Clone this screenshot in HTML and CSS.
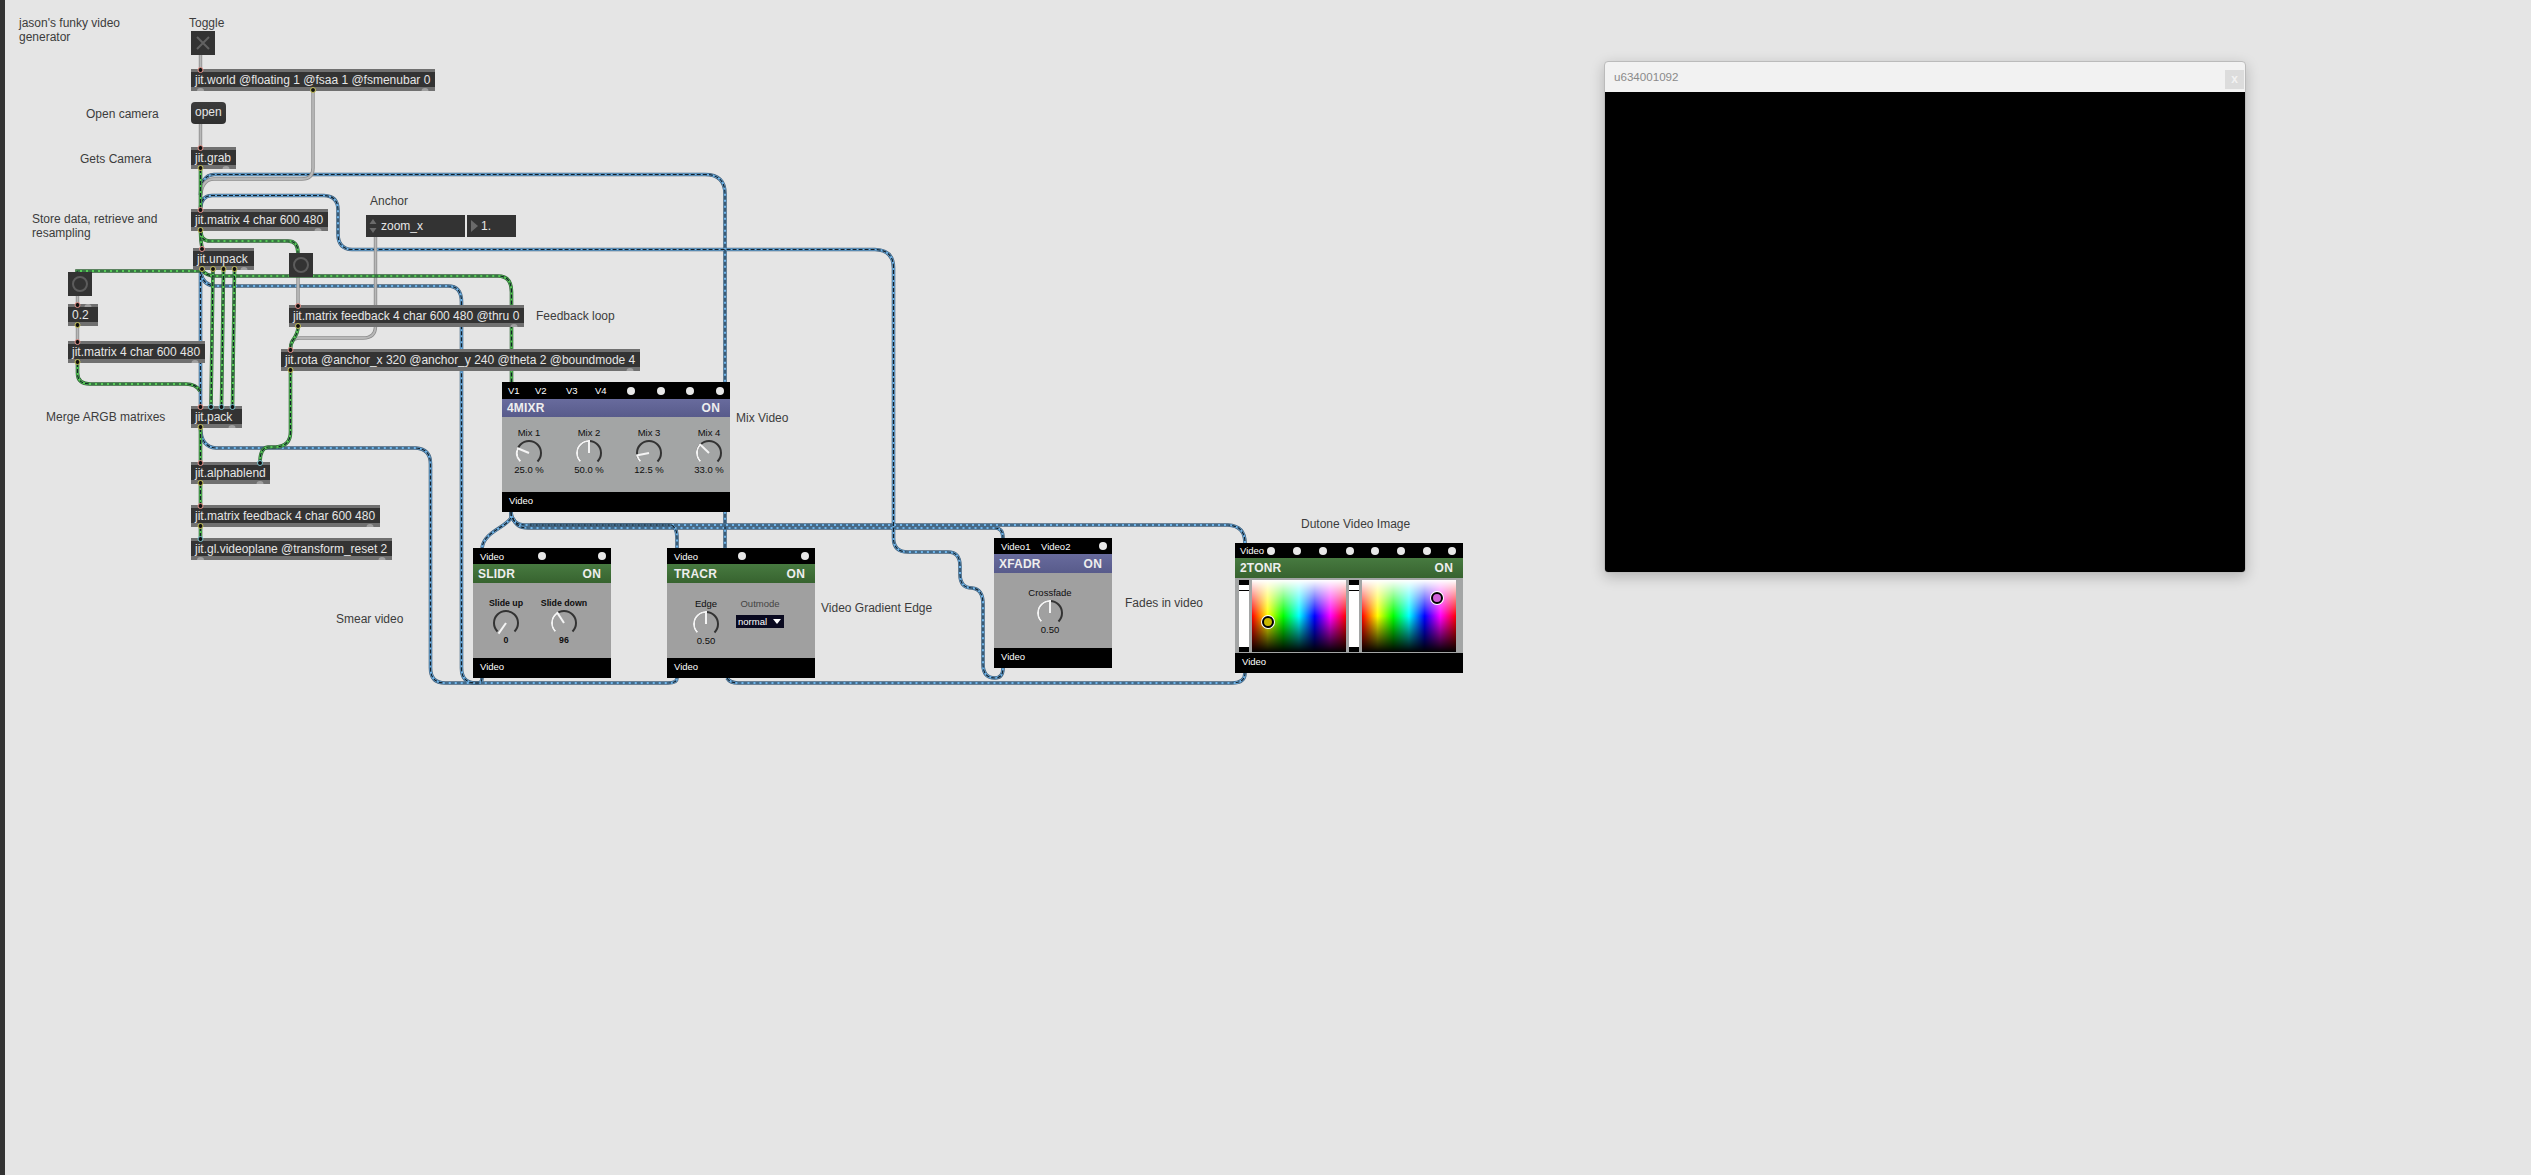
FILE: index.html
```html
<!DOCTYPE html>
<html lang="en">
<head>
    <meta charset="UTF-8" />
    <title>jason's funky video generator</title>
    <link rel="stylesheet" href="styles.css">
</head>
<body>

<div class="patcher">

    <div class="sidebar"></div>

    <!-- Patch cords sit under the objects -->
    <svg class="cords" width="2531" height="1175" viewBox="0 0 2531 1175">
        <defs>
            <g id="grey-paths">
                <path d="M200.5 55V69M200.5 124V147M77.5 296V304M77.5 326V341M298 277V305"/>
                <path d="M313 91V168Q313 179 302 179H214Q203 179 201 193"/>
                <path d="M375.5 237V326Q375.5 338 363 338H300Q293 338 291 343"/>
            </g>
            <g id="green-paths">
                <path d="M200.5 169V209M200.5 231Q200.5 240 202 248M200.5 428V462M200.5 484V505M200.5 527V538"/>
                <path d="M201 232Q201 241 210 241H288Q298 241 298 253"/>
                <path d="M200 271H77V272"/>
                <path d="M213 270L211 406M223.500 270L221.500 406M234.500 270L232.500 406"/>
                <path d="M202 270Q206 276 216 276H498Q511.500 276 511.500 292V382"/>
                <path d="M77.500 363V373Q77.500 384 90 384H186Q196 384 200 391"/>
                <path d="M290.500 371V432Q290.500 446 276 447H268Q260 448 260 462"/>
                <path d="M298 327Q298 333 293 340Q290.500 344 290.500 349"/>
            </g>
            <g id="blue-paths">
                <path d="M200.500 195Q201 175 214 174.500H705Q725 174.500 725 194V548"/>
                <path d="M200.500 208Q201 196 212 195.500H324Q338 196 338 210V234Q338 249 352 249.500H875Q893.500 250 893.500 268V538Q893.500 552 908 552H948Q960 552 960 566V574Q960 588 972 588Q983 589 983 604V664Q983 678 995 678Q1003 678 1003 668"/>
                <path d="M200.500 270V406"/>
                <path d="M201 274Q204 286 216 286H448Q461.500 286 461.500 302V668Q461.500 682 474 683H478Q482 683 482 678"/>
                <path d="M200.500 428Q201 447 216 448H416Q430.500 449 430.500 464V668Q430.500 683 445 683H668Q677 683 677 678"/>
                <path d="M727 678Q730 683 738 683H1232Q1245 683 1245 673"/>
                <path d="M511 512V518C505 528 484 532 482 548"/>
                <path d="M511 512Q512 525 525 525H670Q677 526 677 538V548"/>
                <path d="M513 518Q516 528 528 528H995Q1003 528 1003 538"/>
                <path d="M530 525H1228Q1245 526 1245 543"/>
            </g>
        </defs>
        <use href="#blue-paths" class="cord-edge-blue"/>
        <use href="#blue-paths" class="cord-fill-blue"/>
        <use href="#blue-paths" class="cord-dash"/>
        <use href="#grey-paths" class="cord-edge-grey"/>
        <use href="#grey-paths" class="cord-fill-grey"/>
        <use href="#green-paths" class="cord-edge-green"/>
        <use href="#green-paths" class="cord-fill-green"/>
        <use href="#green-paths" class="cord-dash"/>
    </svg>

    <!-- Comments -->
    <div class="note n-title">jason's funky video<br>generator</div>
    <div class="note n-toggle">Toggle</div>
    <div class="note n-open">Open camera</div>
    <div class="note n-gets">Gets Camera</div>
    <div class="note n-store">Store data, retrieve and<br>resampling</div>
    <div class="note n-anchor">Anchor</div>
    <div class="note n-loop">Feedback loop</div>
    <div class="note n-merge">Merge ARGB matrixes</div>
    <div class="note n-mix">Mix Video</div>
    <div class="note n-smear">Smear video</div>
    <div class="note n-edge">Video Gradient Edge</div>
    <div class="note n-fades">Fades in video</div>
    <div class="note n-dutone">Dutone Video Image</div>

    <!-- UI objects -->
    <div class="toggle">
        <svg width="24" height="24" viewBox="0 0 24 24"><path d="M6 6L18 18M18 6L6 18"/></svg>
    </div>
    <div class="message">open</div>
    <div class="bang b-one"><span></span></div>
    <div class="bang b-two"><span></span></div>

    <div class="umenu">
        <svg width="8" height="16" viewBox="0 0 8 16"><path d="M4 1L7.500 6H.5ZM.5 10H7.500L4 15Z"/></svg>
        <span>zoom_x</span>
    </div>
    <div class="flonum">
        <svg width="7" height="12" viewBox="0 0 7 12"><path d="M0 0L7 6L0 12Z"/></svg>
        <span>1.</span>
    </div>

    <!-- Objects -->
    <div class="obj o-world">jit.world @floating 1 @fsaa 1 @fsmenubar 0</div>
    <div class="obj o-grab">jit.grab</div>
    <div class="obj o-matrix">jit.matrix 4 char 600 480</div>
    <div class="obj o-unpack">jit.unpack</div>
    <div class="obj o-num">0.2</div>
    <div class="obj o-matrix2">jit.matrix 4 char 600 480</div>
    <div class="obj o-thru">jit.matrix feedback 4 char 600 480 @thru 0</div>
    <div class="obj o-rota">jit.rota @anchor_x 320 @anchor_y 240 @theta 2 @boundmode 4</div>
    <div class="obj o-pack">jit.pack</div>
    <div class="obj o-blend">jit.alphablend</div>
    <div class="obj o-feedback">jit.matrix feedback 4 char 600 480</div>
    <div class="obj o-plane">jit.gl.videoplane @transform_reset 2</div>

    <!-- 4MIXR -->
    <div class="device d-mixr">
        <div class="dev-head mixr-head">
            <span>V1</span><span>V2</span><span>V3</span><span>V4</span>
            <i class="dot"></i><i class="dot"></i><i class="dot"></i><i class="dot"></i>
        </div>
        <div class="dev-title purple"><span>4MIXR</span><span>ON</span></div>
        <div class="dev-body mixr-body">
            <div class="knob">
                <label>Mix 1</label>
                <svg width="30" height="30" viewBox="-15 -15 30 30">
                    <circle class="ring" r="12" pathLength="360" stroke-dasharray="270 90" transform="rotate(135)"/>
                    <circle class="arc" r="12" pathLength="360" stroke-dasharray="67.500 360" transform="rotate(135)"/>
                    <line class="needle" x2="13" transform="rotate(202.500)"/>
                </svg>
                <output>25.0 %</output>
            </div>
            <div class="knob">
                <label>Mix 2</label>
                <svg width="30" height="30" viewBox="-15 -15 30 30">
                    <circle class="ring" r="12" pathLength="360" stroke-dasharray="270 90" transform="rotate(135)"/>
                    <circle class="arc" r="12" pathLength="360" stroke-dasharray="135 360" transform="rotate(135)"/>
                    <line class="needle" x2="13" transform="rotate(270)"/>
                </svg>
                <output>50.0 %</output>
            </div>
            <div class="knob">
                <label>Mix 3</label>
                <svg width="30" height="30" viewBox="-15 -15 30 30">
                    <circle class="ring" r="12" pathLength="360" stroke-dasharray="270 90" transform="rotate(135)"/>
                    <circle class="arc" r="12" pathLength="360" stroke-dasharray="33.750 360" transform="rotate(135)"/>
                    <line class="needle" x2="13" transform="rotate(168.750)"/>
                </svg>
                <output>12.5 %</output>
            </div>
            <div class="knob">
                <label>Mix 4</label>
                <svg width="30" height="30" viewBox="-15 -15 30 30">
                    <circle class="ring" r="12" pathLength="360" stroke-dasharray="270 90" transform="rotate(135)"/>
                    <circle class="arc" r="12" pathLength="360" stroke-dasharray="89 360" transform="rotate(135)"/>
                    <line class="needle" x2="13" transform="rotate(224)"/>
                </svg>
                <output>33.0 %</output>
            </div>
        </div>
        <div class="dev-foot">Video</div>
    </div>

    <!-- SLIDR -->
    <div class="device d-slidr">
        <div class="dev-head slidr-head">
            <span>Video</span><i class="dot"></i><i class="dot"></i>
        </div>
        <div class="dev-title green"><span>SLIDR</span><span>ON</span></div>
        <div class="dev-body slidr-body">
            <div class="knob">
                <label class="strong">Slide up</label>
                <svg width="30" height="30" viewBox="-15 -15 30 30">
                    <circle class="ring" r="12" pathLength="360" stroke-dasharray="270 90" transform="rotate(135)"/>
                    <line class="needle" x2="13" transform="rotate(125)"/>
                </svg>
                <output class="strong">0</output>
            </div>
            <div class="knob">
                <label class="strong">Slide down</label>
                <svg width="30" height="30" viewBox="-15 -15 30 30">
                    <circle class="ring" r="12" pathLength="360" stroke-dasharray="270 90" transform="rotate(135)"/>
                    <circle class="arc" r="12" pathLength="360" stroke-dasharray="102 360" transform="rotate(135)"/>
                    <line class="needle" x2="13" transform="rotate(237)"/>
                </svg>
                <output class="strong">96</output>
            </div>
        </div>
        <div class="dev-foot">Video</div>
    </div>

    <!-- TRACR -->
    <div class="device d-tracr">
        <div class="dev-head tracr-head">
            <span>Video</span><i class="dot"></i><i class="dot"></i>
        </div>
        <div class="dev-title green"><span>TRACR</span><span>ON</span></div>
        <div class="dev-body tracr-body">
            <div class="knob">
                <label>Edge</label>
                <svg width="30" height="30" viewBox="-15 -15 30 30">
                    <circle class="ring" r="12" pathLength="360" stroke-dasharray="270 90" transform="rotate(135)"/>
                    <circle class="arc" r="12" pathLength="360" stroke-dasharray="135 360" transform="rotate(135)"/>
                    <line class="needle" x2="13" transform="rotate(270)"/>
                </svg>
                <output>0.50</output>
            </div>
            <div class="outmode">
                <label>Outmode</label>
                <div class="dropdown"><span>normal</span><b></b></div>
            </div>
        </div>
        <div class="dev-foot">Video</div>
    </div>

    <!-- XFADR -->
    <div class="device d-xfadr">
        <div class="dev-head xfadr-head">
            <span>Video1</span><span>Video2</span><i class="dot"></i>
        </div>
        <div class="dev-title purple"><span>XFADR</span><span>ON</span></div>
        <div class="dev-body xfadr-body">
            <div class="knob">
                <label>Crossfade</label>
                <svg width="30" height="30" viewBox="-15 -15 30 30">
                    <circle class="ring" r="12" pathLength="360" stroke-dasharray="270 90" transform="rotate(135)"/>
                    <circle class="arc" r="12" pathLength="360" stroke-dasharray="135 360" transform="rotate(135)"/>
                    <line class="needle" x2="13" transform="rotate(270)"/>
                </svg>
                <output>0.50</output>
            </div>
        </div>
        <div class="dev-foot">Video</div>
    </div>

    <!-- 2TONR -->
    <div class="device d-tonr">
        <div class="dev-head tonr-head">
            <span>Video</span>
            <i class="dot"></i><i class="dot"></i><i class="dot"></i><i class="dot"></i>
            <i class="dot"></i><i class="dot"></i><i class="dot"></i><i class="dot"></i>
        </div>
        <div class="dev-title green tonr-title"><span>2TONR</span><span>ON</span></div>
        <div class="dev-body tonr-body">
            <div class="strip"><i></i></div>
            <div class="swatch"><b class="handle h-yellow"></b></div>
            <div class="strip"><i></i></div>
            <div class="swatch"><b class="handle h-pink"></b></div>
        </div>
        <div class="dev-foot">Video</div>
    </div>

    <!-- Inlets and outlets go over the objects -->
    <svg class="ports" width="2531" height="1175" viewBox="0 0 2531 1175">
        <g class="inlet">
            <circle cx="200.500" cy="70" r="2.500"/><circle cx="200.500" cy="148" r="2.500"/><circle cx="200.500" cy="210" r="2.500"/>
            <circle cx="202" cy="249" r="2.500"/><circle cx="77.500" cy="305" r="2.500"/><circle cx="77.500" cy="342" r="2.500"/>
            <circle cx="298" cy="306" r="2.500"/><circle cx="290.500" cy="350" r="2.500"/><circle cx="200.500" cy="407" r="2.500"/>
            <circle cx="200.500" cy="463" r="2.500"/><circle cx="200.500" cy="506" r="2.500"/>
        </g>
        <g class="inlet-cold">
            <circle cx="211" cy="407" r="2.500"/><circle cx="221.500" cy="407" r="2.500"/><circle cx="232.500" cy="407" r="2.500"/>
            <circle cx="260" cy="463" r="2.500"/><circle cx="200.500" cy="539" r="2.500"/>
        </g>
        <g class="outlet">
            <circle cx="313" cy="90" r="2.500"/><circle cx="200.500" cy="168" r="2.500"/><circle cx="200.500" cy="230" r="2.500"/>
            <circle cx="202" cy="269" r="2.500"/><circle cx="213" cy="269" r="2.500"/><circle cx="223.500" cy="269" r="2.500"/><circle cx="234.500" cy="269" r="2.500"/>
            <circle cx="77.500" cy="325" r="2.500"/><circle cx="77.500" cy="362" r="2.500"/><circle cx="298" cy="326" r="2.500"/>
            <circle cx="290.500" cy="370" r="2.500"/><circle cx="200.500" cy="427" r="2.500"/><circle cx="200.500" cy="483" r="2.500"/><circle cx="200.500" cy="526" r="2.500"/>
        </g>
        <!-- unused outlets are small domes inside the bottom band -->
        <g class="outlet-idle">
            <path d="M197 91a3.500 3 0 0 1 7 0z"/><path d="M421.500 91a3.500 3 0 0 1 7 0z"/><path d="M222.500 169a3.500 3 0 0 1 7 0z"/>
            <path d="M314.500 231a3.500 3 0 0 1 7 0z"/><path d="M240.500 270a3.500 3 0 0 1 7 0z"/><path d="M84.500 307a3.500 3 0 0 1 7 0z"/>
            <path d="M191.500 363a3.500 3 0 0 1 7 0z"/><path d="M510.500 327a3.500 3 0 0 1 7 0z"/><path d="M626.500 371a3.500 3 0 0 1 7 0z"/>
            <path d="M228.500 428a3.500 3 0 0 1 7 0z"/><path d="M256.500 484a3.500 3 0 0 1 7 0z"/><path d="M366.500 527a3.500 3 0 0 1 7 0z"/>
            <path d="M197 560a3.500 3 0 0 1 7 0z"/><path d="M378.500 560a3.500 3 0 0 1 7 0z"/>
        </g>
    </svg>

    <!-- Floating jit.world window -->
    <div class="window">
        <div class="win-title">
            <span>u634001092</span>
            <div class="win-close">x</div>
        </div>
        <div class="win-view"></div>
    </div>

</div>

</body>
</html>
```

FILE: styles.css
```css
html, body {
    margin: 0;
    height: 100%;
    background-color: #e5e5e5;
    font-family: "Liberation Sans", Arial, sans-serif;
    overflow: hidden;
}

.patcher {
    position: relative;
    width: 2531px;
    height: 1175px;
}

.sidebar {
    position: absolute;
    left: 0;
    top: 0;
    bottom: 0;
    width: 5px;
    background-color: #333;
}

.cords, .ports {
    position: absolute;
    left: 0;
    top: 0;
    fill: none;
}

.cord-edge-blue { stroke: #41607c; stroke-width: 3.600; fill: none; }
.cord-fill-blue { stroke: #70b5ea; stroke-width: 2.200; fill: none; }
.cord-edge-green { stroke: #2f6335; stroke-width: 3.600; fill: none; }
.cord-fill-green { stroke: #58cb58; stroke-width: 2.200; fill: none; }
.cord-edge-grey { stroke: #8c8c8c; stroke-width: 3.400; fill: none; }
.cord-fill-grey { stroke: #b8b8b8; stroke-width: 1.800; fill: none; }
.cord-dash { stroke: #14202a; stroke-width: 1.200; stroke-dasharray: 4 2; fill: none; }

.inlet circle { fill: #111; stroke: #e8958c; stroke-width: 1; }
.inlet-cold circle { fill: #111; stroke: #7cc4cf; stroke-width: 1; }
.outlet circle { fill: #111; stroke: #c9c45a; stroke-width: 1; }
.outlet-idle path { fill: #a0a0a0; }

/* comments */
.note {
    position: absolute;
    font-size: 12px;
    line-height: 14px;
    color: #3c3c3c;
    white-space: nowrap;
}

.n-title { left: 19px; top: 16px; }
.n-toggle { left: 189px; top: 16px; }
.n-open { left: 86px; top: 107px; }
.n-gets { left: 80px; top: 152px; }
.n-store { left: 32px; top: 212px; }
.n-anchor { left: 370px; top: 194px; }
.n-loop { left: 536px; top: 309px; }
.n-merge { left: 46px; top: 410px; }
.n-mix { left: 736px; top: 411px; }
.n-smear { left: 336px; top: 612px; }
.n-edge { left: 821px; top: 601px; }
.n-fades { left: 1125px; top: 596px; }
.n-dutone { left: 1301px; top: 517px; }

/* patcher objects */
.obj {
    position: absolute;
    box-sizing: border-box;
    height: 22px;
    padding: 0 4px;
    background-color: #333;
    border-top: 3px solid #707070;
    border-bottom: 4px solid #707070;
    color: #e6e6e6;
    font-size: 12px;
    line-height: 16px;
    white-space: nowrap;
    overflow: hidden;
}

.o-world { left: 191px; top: 69px; width: 244px; }
.o-grab { left: 191px; top: 147px; width: 45px; }
.o-matrix { left: 191px; top: 209px; width: 137px; }
.o-unpack { left: 193px; top: 248px; width: 61px; }
.o-num { left: 68px; top: 304px; width: 30px; }
.o-matrix2 { left: 68px; top: 341px; width: 137px; }
.o-thru { left: 289px; top: 305px; width: 235px; }
.o-rota { left: 281px; top: 349px; width: 359px; }
.o-pack { left: 191px; top: 406px; width: 51px; }
.o-blend { left: 191px; top: 462px; width: 79px; }
.o-feedback { left: 191px; top: 505px; width: 189px; }
.o-plane { left: 191px; top: 538px; width: 201px; }

.toggle {
    position: absolute;
    left: 191px;
    top: 31px;
    width: 24px;
    height: 24px;
    background-color: #333;
}

.toggle svg { display: block; }
.toggle path { stroke: #626262; stroke-width: 2; fill: none; }

.message {
    position: absolute;
    left: 191px;
    top: 102px;
    width: 35px;
    height: 22px;
    box-sizing: border-box;
    padding-left: 4px;
    border-radius: 4px;
    background: linear-gradient(#3c3c3c, #303030);
    color: #e6e6e6;
    font-size: 12px;
    line-height: 21px;
}

.bang {
    position: absolute;
    width: 24px;
    height: 24px;
    background-color: #333;
    display: flex;
    justify-content: center;
    align-items: center;
}

.bang span {
    width: 12px;
    height: 12px;
    border: 2px solid #5c5c5c;
    border-radius: 50%;
}

.b-one { left: 289px; top: 253px; }
.b-two { left: 68px; top: 272px; }

.umenu, .flonum {
    position: absolute;
    top: 215px;
    height: 22px;
    background-color: #333;
    color: #e6e6e6;
    font-size: 12px;
    display: flex;
    align-items: center;
    box-sizing: border-box;
}

.umenu { left: 366px; width: 99px; padding-left: 3px; gap: 4px; }
.flonum { left: 467px; width: 49px; padding-left: 4px; gap: 3px; }
.umenu path, .flonum path { fill: #6a6a6a; }

/* bpatcher devices */
.device {
    position: absolute;
    height: 130px;
    background-color: #000;
    display: grid;
    grid-template-columns: minmax(0, 1fr);
    grid-template-rows: 16px 19px 75px 20px;
    color: #fff;
    font-size: 9.500px;
}

.d-mixr { left: 502px; top: 382px; width: 228px; grid-template-rows: 17px 18px 75px 20px; }
.d-slidr { left: 473px; top: 548px; width: 138px; }
.d-tracr { left: 667px; top: 548px; width: 148px; }
.d-xfadr { left: 994px; top: 538px; width: 118px; }
.d-tonr { left: 1235px; top: 543px; width: 228px; grid-template-rows: 15px 20px 75px 20px; }

.dev-head {
    display: grid;
    align-items: center;
    padding-left: 7px;
}

.dot {
    width: 8px;
    height: 8px;
    border-radius: 50%;
    background-color: #e8e8e8;
}

.mixr-head { padding-left: 6px; grid-template-columns: 27px 31px 29px 32px 30px 29px 30px 8px; }
.slidr-head { grid-template-columns: 58px 60px 8px; }
.tracr-head { grid-template-columns: 64px 63px 8px; }
.xfadr-head { grid-template-columns: 40px 58px 8px; }
.tonr-head { padding-left: 5px; grid-template-columns: 27px 26px 26px 27px 25px 26px 26px 25px 8px; }

.dev-title {
    display: flex;
    justify-content: space-between;
    align-items: center;
    padding: 0 10px 0 5px;
    font-size: 12px;
    font-weight: bold;
    letter-spacing: 0.2px;
    color: #eee;
}

.d-tracr .dev-title { padding-left: 7px; }

.purple { background: linear-gradient(#686b9d, #585b8b); }
.green { background: linear-gradient(#477a40, #37632f); }

.dev-body {
    background-color: #a0a0a0;
    color: #0e0e0e;
}

.dev-foot {
    padding: 3px 0 0 7px;
    line-height: 12px;
}

.knob {
    display: flex;
    flex-direction: column;
    align-items: center;
    width: 50px;
    flex: none;
}

.knob label, .knob output {
    display: block;
    line-height: 12px;
    white-space: nowrap;
}

.knob svg { margin-top: -1px; }
.knob output { margin-top: -4px; }
.knob .strong { font-weight: bold; font-size: 8.800px; }

.ring, .arc, .needle { fill: none; stroke-width: 2; }
.ring { stroke: #333; }
.arc { stroke: #f4f4f4; }
.needle { stroke: #f4f4f4; }

.mixr-body {
    display: flex;
    gap: 10px;
    padding: 10px 0 0 2px;
    background-color: #a3a5a5;
}

.slidr-body {
    display: flex;
    gap: 8px;
    padding: 14px 0 0 8px;
}

.tracr-body {
    display: flex;
    gap: 5px;
    padding: 15px 0 0 14px;
}

.xfadr-body {
    display: flex;
    justify-content: center;
    padding: 14px 6px 0 0;
}

.outmode label { display: block; line-height: 12px; color: #444; text-align: center; }

.dropdown {
    display: flex;
    justify-content: space-between;
    align-items: center;
    box-sizing: border-box;
    width: 48px;
    height: 13px;
    margin-top: 5px;
    padding: 0 3px 0 2px;
    background-color: #0a0a20;
    color: #fff;
}

.dropdown b {
    border-left: 4px solid transparent;
    border-right: 4px solid transparent;
    border-top: 5px solid #fff;
}

.tonr-body {
    display: flex;
    gap: 3px;
    padding: 2px 0 0 4px;
    background-color: #a3a5a5;
    align-items: flex-start;
}

.strip {
    position: relative;
    width: 10px;
    height: 72px;
    box-sizing: border-box;
    background-color: #fff;
    border-top: 5px solid #000;
    border-bottom: 5px solid #000;
}

.strip i {
    position: absolute;
    left: 0;
    right: 0;
    top: 5px;
    height: 1px;
    background-color: #000;
}

.swatch {
    position: relative;
    width: 94px;
    height: 72px;
    background:
        linear-gradient(#fff, rgba(255,255,255,0) 50%, rgba(0,0,0,0) 50%, #000),
        linear-gradient(to right, #f00, #ff0, #0f0, #0ff, #00f, #f0f, #f00);
}

.handle {
    position: absolute;
    width: 8px;
    height: 8px;
    border: 2px solid #000;
    border-radius: 50%;
    box-shadow: 0 0 0 1px #fff;
}

.h-yellow { left: 10px; top: 36px; background-color: #c8b800; }
.h-pink { left: 69px; top: 12px; background-color: #d060d8; }

/* window */
.window {
    position: absolute;
    left: 1604px;
    top: 61px;
    width: 642px;
    box-sizing: border-box;
    border: 1px solid #bbb;
    border-radius: 4px;
    background-color: #f2f2f2;
    box-shadow: 0 4px 14px rgba(0,0,0,0.22);
    overflow: hidden;
}

.win-title {
    display: flex;
    justify-content: space-between;
    height: 30px;
    padding: 8px 1px 0 9px;
    box-sizing: border-box;
    font-size: 11.600px;
    color: #8a8a8a;
}

.win-close {
    width: 19px;
    height: 19px;
    background-color: #dcdcdc;
    color: #f2f2f2;
    font-size: 12px;
    font-weight: bold;
    line-height: 19px;
    text-align: center;
}

.win-view {
    height: 480px;
    background-color: #000;
}
```
